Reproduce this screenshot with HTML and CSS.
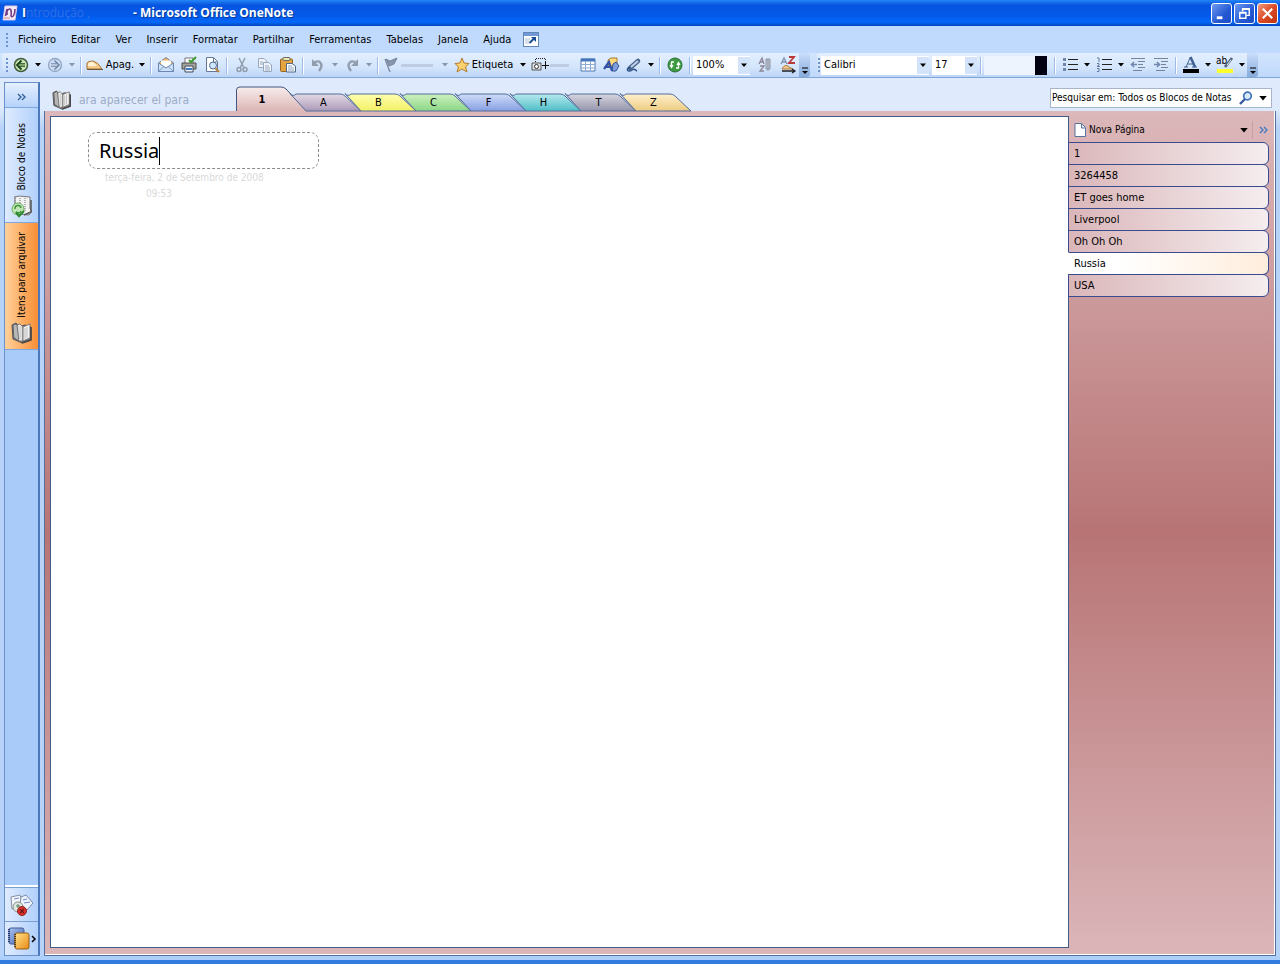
FILE: index.html
```html
<!DOCTYPE html>
<html lang="pt">
<head>
<meta charset="utf-8">
<title>Microsoft Office OneNote</title>
<link rel="stylesheet" href="styles.css">
</head>
<body>
<svg class="defs" aria-hidden="true">
  <defs>
    <linearGradient id="gBook" x1="0" x2="1"><stop offset="0" stop-color="#999"/><stop offset=".4" stop-color="#fff"/><stop offset="1" stop-color="#ccc"/></linearGradient>
    <linearGradient id="gOrange" x1="0" x2="1" y2="1"><stop offset="0" stop-color="#ffe38a"/><stop offset="1" stop-color="#e98a16"/></linearGradient>
    <linearGradient id="gBlue" x1="0" x2="1" y2="1"><stop offset="0" stop-color="#a9c3f2"/><stop offset="1" stop-color="#4062b0"/></linearGradient>
    <symbol id="arrow" viewBox="0 0 6 4"><path d="M0 0H6L3 3.5Z" fill="currentColor"/></symbol>
    <symbol id="book" viewBox="0 0 22 22">
      <path d="M1 3L5 1L8 5L14 3L20 5V18L11 21L2 17Z" fill="#777" stroke="#555"/>
      <path d="M2 3L5 2L8 5V19L3 16Z" fill="#b5b5b5" stroke="#666"/>
      <path d="M6 3L9 2L12 5V19L8 19Z" fill="url(#gBook)" stroke="#777"/>
      <path d="M12 5L19 2V16L12 19Z" fill="#f4f4f4" stroke="#777"/>
      <path d="M4 4V15M9 4V17M14 6V17M16 5V16" stroke="#bbb"/>
      <path d="M20 5V18L11 21" fill="none" stroke="#444" stroke-width="1.500"/>
    </symbol>
  </defs>
</svg>
<div class="window">
  <header class="titlebar">
    <svg class="app-icon" viewBox="0 0 16 16"><path d="M3 1H15L13 15H1Z" fill="#f4ecf6" stroke="#d8cbe8"/><path d="M3.500 11L5 4V10M5 6C8 2 10 4 9 11C10 13 13 11 13 4" fill="none" stroke="#743b86" stroke-width="1.600"/><path d="M2 13H8" stroke="#d68b93"/></svg>
    <h1 class="title"><span>I</span><span class="title-doc">ntrodução ,</span><span>- Microsoft Office OneNote</span></h1>
    <div class="window-buttons">
      <button class="winbtn" aria-label="Minimizar"><svg viewBox="0 0 18 18"><path d="M4 13.500H10" stroke="#fff" stroke-width="3"/></svg></button>
      <button class="winbtn" aria-label="Restaurar"><svg viewBox="0 0 18 18"><path d="M7 7V4H14V11H11M7 4.500H14" fill="none" stroke="#fff" stroke-width="1.500"/><path d="M4 8H10.500V14H4ZM4 8.500H10" fill="none" stroke="#fff" stroke-width="1.500"/></svg></button>
      <button class="winbtn close" aria-label="Fechar"><svg viewBox="0 0 18 18"><path d="M4 4L14 14M14 4L4 14" stroke="#fff" stroke-width="2.200"/></svg></button>
    </div>
  </header>

  <nav class="menubar" aria-label="Menu">
    <span class="grip"></span>
    <button>Ficheiro</button><button>Editar</button><button>Ver</button><button>Inserir</button><button>Formatar</button><button>Partilhar</button><button>Ferramentas</button><button>Tabelas</button><button>Janela</button><button>Ajuda</button>
    <button class="fullpage" aria-label="Vista de página inteira"><svg viewBox="0 0 16 15"><rect x=".5" y=".5" width="15" height="14" fill="#fff" stroke="#6286b5"/><path d="M1 2.500H15" stroke="#6f9ad5" stroke-width="3"/><path d="M2 7H7M2 9H6M2 11H6" stroke="#aebfd8"/><path d="M6.500 11L11 6.500" stroke="#164c91" stroke-width="2"/><path d="M8 5H13V10Z" fill="#164c91"/></svg></button>
  </nav>

  <div class="toolbars">
    <div class="toolbar" role="toolbar" aria-label="Padrão">
      <span class="grip"></span>
      <button class="tool" aria-label="Retroceder"><svg viewBox="0 0 16 16"><circle cx="8" cy="8" r="6.500" fill="#cde5b6" stroke="#3f5f3d" stroke-width="1.500"/><path d="M12 8H6" stroke="#174219" stroke-width="3.500"/><path d="M12 8H6" stroke="#b6dc93" stroke-width="1.300"/><path d="M8.500 3.500L4 8L8.500 12.500" fill="none" stroke="#174219" stroke-width="1.800"/></svg></button>
      <button class="drop" aria-label="Histórico"><svg><use href="#arrow"/></svg></button>
      <button class="tool" aria-label="Avançar"><svg viewBox="0 0 16 16"><circle cx="8" cy="8" r="6.500" fill="#cbdcf4" stroke="#91a5c2" stroke-width="1.300"/><path d="M4 8H10" stroke="#7187a6" stroke-width="3.500"/><path d="M4 8H10" stroke="#dce8f8" stroke-width="1.300"/><path d="M7.500 3.500L12 8L7.500 12.500" fill="none" stroke="#7187a6" stroke-width="1.600"/></svg></button>
      <button class="drop off" aria-label="Avançar para"><svg><use href="#arrow"/></svg></button>
      <span class="sep"></span>
      <button class="tool wide eraser"><svg viewBox="0 0 18 16"><path d="M1 12V6Q2 4 7 4Q12 5 16 12Z" fill="#f6ca89" stroke="#a77337"/><path d="M2 7Q4 4 7 5L11 9H2Z" fill="#fff2d4"/><path d="M1 12.500H17" stroke="#68533e"/></svg>Apag.</button>
      <button class="drop" aria-label="Opções da borracha"><svg><use href="#arrow"/></svg></button>
      <span class="sep"></span>
      <button class="tool" aria-label="Correio"><svg viewBox="0 0 16 16"><path d="M.5 6L8 .5L15.500 6V14.500H.5Z" fill="#f5b55e" stroke="#7787a3"/><path d="M3 3.500H13V10H3Z" fill="#fff"/><path d="M.5 6L8 11L15.500 6V14.500H.5Z" fill="#cfe2fc" stroke="#6a86b2"/><path d="M1 14L6 9.500M15 14L10 9.500" stroke="#7f99be"/></svg></button>
      <button class="tool" aria-label="Imprimir"><svg viewBox="0 0 16 16"><path d="M4 1H12V7H4Z" fill="#fff" stroke="#777"/><path d="M1 6H15V12H1Z" fill="#a6a69e" stroke="#494b4b"/><path d="M4 9H12V15H4Z" fill="#edf4ff" stroke="#424a55"/><path d="M5 12H11" stroke="#447ac2" stroke-width="2"/><path d="M8 3L10 5L15 0" fill="none" stroke="#3e9b30" stroke-width="2"/></svg></button>
      <button class="tool" aria-label="Pré-visualizar"><svg viewBox="0 0 16 16"><path d="M2.500 .5H9.500L13.500 4.500V14.500H2.500Z" fill="#fff" stroke="#637797"/><path d="M9.500 1V5H13" fill="none" stroke="#637797"/><circle cx="9" cy="8.500" r="3.500" fill="#cee6fc" stroke="#536c8a"/><path d="M11.500 11.500L15 15" stroke="#ba8240" stroke-width="2.200"/></svg></button>
      <span class="sep"></span>
      <button class="tool" aria-label="Cortar"><svg viewBox="0 0 16 16"><g fill="none" stroke="#909dac" stroke-width="1.500"><path d="M5 1L10 11M11 1L6 11"/><circle cx="5" cy="12.500" r="2"/><circle cx="11" cy="12.500" r="2"/></g></svg></button>
      <button class="tool" aria-label="Copiar"><svg viewBox="0 0 16 16"><g fill="#f0f4fa" stroke="#98a8bf"><path d="M1.500 1.500H7L9.500 4V10.500H1.500Z"/><path d="M6.500 5.500H12L14.500 8V14.500H6.500Z"/><path d="M3 5H6M3 7H6M8 9H12M8 11H13M8 13H13"/></g></svg></button>
      <button class="tool" aria-label="Colar"><svg viewBox="0 0 16 16"><rect x=".5" y="2" width="12" height="12.500" rx="1" fill="#e4a53f" stroke="#9a6523"/><rect x="3" y=".5" width="7" height="3" rx="1" fill="#eee6b3" stroke="#6b6b62"/><path d="M6.500 6.500H12L15.500 9V15H6.500Z" fill="#fff" stroke="#53698b"/><path d="M8 9H12M8 11H14M8 13H14" stroke="#8da4c5"/></svg></button>
      <span class="sep"></span>
      <button class="tool" aria-label="Anular"><svg viewBox="0 0 16 16"><path d="M4 6C8 2 15 6 9 14" fill="none" stroke="#929eae" stroke-width="2.400"/><path d="M2 2V9H9Z" fill="#929eae"/></svg></button>
      <button class="drop off" aria-label="Anular lista"><svg><use href="#arrow"/></svg></button>
      <button class="tool" aria-label="Refazer"><svg viewBox="0 0 16 16"><path d="M12 6C8 2 1 6 7 14" fill="none" stroke="#929eae" stroke-width="2.400"/><path d="M14 2V9H7Z" fill="#929eae"/></svg></button>
      <button class="drop off" aria-label="Refazer lista"><svg><use href="#arrow"/></svg></button>
      <span class="sep"></span>
      <button class="tool flag" aria-label="Tarefa"><svg viewBox="0 0 16 16"><path d="M2 2L7 15" stroke="#8491a6" stroke-width="1.500"/><path d="M3 2L7 4L14 1L11 7L6 9Z" fill="#8896ab" stroke="#7885a0"/></svg></button>
      <span class="blank task"></span>
      <button class="drop off" aria-label="Opções da tarefa"><svg><use href="#arrow"/></svg></button>
      <button class="tool wide tag"><svg viewBox="0 0 16 16"><path d="M8 1L10 6L15 6.500L11.500 10L13 15L8 12L3 15L4.500 10L1 6.500L6 6Z" fill="#ffd16d" stroke="#b37b2b"/></svg>Etiqueta</button>
      <button class="drop" aria-label="Etiquetas"><svg><use href="#arrow"/></svg></button>
      <button class="tool" aria-label="Recorte de ecrã"><svg viewBox="0 0 16 16"><path d="M3.500 5V1.500H13.500V5" fill="none" stroke="#222" stroke-dasharray="1 1"/><path d="M0 6H9V13H0Z" fill="#dce1e5" stroke="#555"/><circle cx="4.500" cy="9.500" r="2" fill="#fff" stroke="#333"/><path d="M13.500 5V12M10 8.500H17" stroke="#111"/></svg></button>
      <span class="blank clip"></span>
      <button class="tool" aria-label="Tabela"><svg viewBox="0 0 16 16"><path d="M1 2H15V14H1Z" fill="#fff" stroke="#5178b2"/><path d="M1 3H15" stroke="#4678ba" stroke-width="3"/><path d="M5.500 4V14M10.500 4V14M1 7.500H15M1 11H15" stroke="#8aaad5"/></svg></button>
      <button class="tool" aria-label="Desenho"><svg viewBox="0 0 16 16"><path d="M5 3L8 1H14V7L11 9H5Z" fill="#ffd878" stroke="#a77b38"/><path d="M10 7L13 5L16 9L13 14H9Z" fill="#7f9edb" stroke="#33549b"/><path d="M1 12L6 5L9 14M3 10H8" fill="none" stroke="#3451a8" stroke-width="2.200"/></svg></button>
      <button class="tool" aria-label="Gravar áudio"><svg viewBox="0 0 16 16"><path d="M12 4L4 11" stroke="#48648c" stroke-width="4.500" stroke-linecap="round"/><path d="M12 4L5 10" stroke="#c1d2eb" stroke-width="2"/><path d="M4 10C-1 12 2 16 6 13C9 11 9 13 11 14" fill="none" stroke="#2f558c" stroke-width="1.500"/></svg></button>
      <button class="drop" aria-label="Opções de gravação"><svg><use href="#arrow"/></svg></button>
      <span class="sep"></span>
      <button class="tool" aria-label="Sincronizar"><svg viewBox="0 0 16 16"><circle cx="8" cy="8" r="7" fill="#3d9a43" stroke="#286e35"/><path d="M7 5H4.500V10M3 8L4.500 10.500L6 8M9 11H11.500V6M10 8L11.500 5.500L13 8" fill="none" stroke="#fff" stroke-width="1.300"/></svg></button>
      <span class="sep"></span>
      <span class="combo zoom"><select aria-label="Zoom"><option>100%</option></select><svg><use href="#arrow"/></svg></span>
      <button class="tool" aria-label="Ordenar"><svg viewBox="0 0 16 16"><path d="M2 7L5 1L7 7M3 5H6M3 9H7L3 14H7" fill="none" stroke="#8c8795" stroke-width="1.300"/><path d="M9 2H13V12H9ZM11 2V14" fill="#c2c8d5" stroke="#8b93a4"/></svg></button>
      <button class="tool" aria-label="Idioma"><svg viewBox="0 0 16 16"><path d="M1 7L4 1L7 7M2 5H6" fill="none" stroke="#7f92b4" stroke-width="1.300"/><path d="M9 0H14L9 6H15" fill="none" stroke="#b93838" stroke-width="1.800"/><path d="M2 12Q5 6 9 10L13 12Z" fill="#f4c889" stroke="#b17b41"/><path d="M2 14H14M12 12L15 14L12 16" fill="none" stroke="#222" stroke-width="1.300"/></svg></button>
      <button class="cap" aria-label="Mais botões"><svg viewBox="0 0 8 8"><path d="M1 1H7" stroke="#000"/><path d="M1 4H7L4 7Z"/></svg></button>
    </div>
    <div class="toolbar format" role="toolbar" aria-label="Formatação">
      <span class="grip"></span>
      <span class="combo font"><select aria-label="Tipo de letra"><option>Calibri</option></select><svg><use href="#arrow"/></svg></span>
      <span class="combo size"><select aria-label="Tamanho"><option>17</option></select><svg><use href="#arrow"/></svg></span>
      <span class="sep"></span>
      <button class="ink" aria-label="Cor"></button>
      <span class="sep"></span>
      <button class="tool" aria-label="Marcas"><svg viewBox="0 0 16 16"><path d="M6 2.500H16M6 7.500H16M6 12.500H16" stroke="#222"/><path d="M1 2.500H4M1 7.500H4M1 12.500H4" stroke="#7087aa" stroke-width="3"/></svg></button>
      <button class="drop" aria-label="Tipos de marcas"><svg><use href="#arrow"/></svg></button>
      <button class="tool" aria-label="Numeração"><svg viewBox="0 0 16 16"><path d="M6 2.500H16M6 7.500H16M6 12.500H16" stroke="#222"/><path d="M1 1H3V5M1 6.500H3V8L1 9.500H4M1 11.500H3V14.500H1" fill="none" stroke="#617ba3"/></svg></button>
      <button class="drop" aria-label="Tipos de numeração"><svg><use href="#arrow"/></svg></button>
      <button class="tool" aria-label="Diminuir avanço"><svg viewBox="0 0 16 16"><path d="M1 1.500H15M8 4.500H15M8 7.500H13M8 10.500H15M3 13.500H12" stroke="#77859c"/><path d="M7 7.500H2M4 5L1.500 7.500L4 10" fill="none" stroke="#6e86ad" stroke-width="1.500"/></svg></button>
      <button class="tool" aria-label="Aumentar avanço"><svg viewBox="0 0 16 16"><path d="M1 1.500H15M8 4.500H15M8 7.500H13M8 10.500H15M3 13.500H12" stroke="#77859c"/><path d="M1 7.500H6M4 5L6.500 7.500L4 10" fill="none" stroke="#6e86ad" stroke-width="1.500"/></svg></button>
      <span class="sep"></span>
      <button class="tool" aria-label="Cor do texto"><svg viewBox="0 0 16 16"><path d="M3 10L7.500 0" stroke="#3e5f90"/><path d="M7.500 0L12 10" stroke="#3e5f90" stroke-width="2.500"/><path d="M5 7H10M1 10H5M9 10H14" stroke="#3e5f90"/><path d="M0 12H16V16H0Z"/></svg></button>
      <button class="drop" aria-label="Cores do texto"><svg><use href="#arrow"/></svg></button>
      <button class="tool highlight" aria-label="Realce"><span>ab</span><svg viewBox="0 0 16 16"><path d="M0 12H16V16H0Z" fill="#ffff2d"/><path d="M8 10L15 1" stroke="#596a7c" stroke-width="2.800"/><path d="M10 8L14 3" stroke="#dce8ef"/></svg></button>
      <button class="drop" aria-label="Cores de realce"><svg><use href="#arrow"/></svg></button>
      <button class="cap" aria-label="Mais formatos"><svg viewBox="0 0 8 8"><path d="M1 1H7" stroke="#000"/><path d="M1 4H7L4 7Z"/></svg></button>
    </div>
  </div>

  <div class="workspace">
    <aside class="sidebar">
      <button class="expand" aria-label="Expandir"><svg viewBox="0 0 10 8"><path d="M1 1L4 4L1 7M5 1L8 4L5 7" fill="none" stroke="#35619c" stroke-width="1.400"/></svg></button>
      <button class="notebook"><svg viewBox="0 0 22 22"><path d="M4 2L8 1L19 2V14L21 16L18 20L9 19L4 16Z" fill="#f2f2f2" stroke="#777"/><path d="M4 1V12M9 3V15M14 3V16" stroke="#777" stroke-dasharray="1 1"/><path d="M20 5V17L13 20" fill="none" stroke="#555" stroke-width="1.500"/><circle cx="7" cy="14" r="6" fill="#c2e6b5" stroke="#6cae61"/><path d="M4 14A3 3 0 0 1 10 13M10 16A3 3 0 0 1 5 17" fill="none" stroke="#3e963e" stroke-width="1.500"/><path d="M5 17L8 21L13 16" fill="none" stroke="#2f8a34" stroke-width="2.200"/></svg><span>Bloco de Notas</span></button>
      <button class="notebook selected"><svg><use href="#book"/></svg><span>Itens para arquivar</span></button>
      <div class="side-space"></div>
      <button class="side-tool" aria-label="Notas não arquivadas"><svg viewBox="0 0 24 24"><path d="M1 4L10 2L13 12L2 16Z" fill="#f4f6fa" stroke="#8790a0"/><path d="M11 4L16 2L23 10L17 17L10 11Z" fill="#edf3fc" stroke="#7c8ba7"/><path d="M4 6L9 5M13 7L17 6M14 10L20 9" stroke="#6e8cd0"/><circle cx="8" cy="14" r="5" fill="#dfe9df" stroke="#838d88"/><path d="M6 13H10M8 11V15" stroke="#5b806b"/><circle cx="12" cy="18" r="4.500" fill="#d9352d" stroke="#99201c"/><path d="M10 16L14 20M14 16L10 20" stroke="#6d1613" stroke-width="1.200"/></svg></button>
      <button class="side-tool books" aria-label="Todos os blocos"><svg viewBox="0 0 24 24"><rect x="2" y="1" width="15" height="16" rx="2" fill="url(#gBlue)" stroke="#435c95"/><path d="M2 2V16" stroke="#26396c" stroke-width="2" stroke-dasharray="1 1"/><rect x="8" y="6" width="14" height="16" rx="2" fill="url(#gOrange)" stroke="#955d16"/><path d="M8 7V21" stroke="#573a16" stroke-width="2" stroke-dasharray="1 1"/></svg><svg class="more" viewBox="0 0 4 8"><path d="M0 1L3 4L0 7" fill="none" stroke="#000" stroke-width="1.500"/></svg></button>
    </aside>

    <main class="content">
      <div class="section-row">
        <div class="book-title"><svg><use href="#book"/></svg><span>ara aparecer el para</span></div>
        <nav class="tabs" aria-label="Secções">
          <button class="tab active"><svg viewBox="0 0 74 25"><defs><linearGradient id="t1" x2="0" y2="1"><stop stop-color="#f8ecec"/><stop offset="1" stop-color="#dcb6b6"/></linearGradient></defs><path d="M.5 25V4Q.5 1 4 1H45Q48 1 50 3L71 25" fill="url(#t1)" stroke="#435781"/></svg><span>1</span></button>
          <button class="tab"><svg viewBox="0 0 74 18"><defs><linearGradient id="ta" x2="0" y2="1"><stop stop-color="#e6dce6"/><stop offset="1" stop-color="#ab99b8"/></linearGradient></defs><path d="M2 .5Q5 4 8 1H52Q55 1 57 3L73 18H18Z" fill="url(#ta)" stroke="#536c9a"/></svg><span>A</span></button>
          <button class="tab"><svg viewBox="0 0 74 18"><defs><linearGradient id="tb" x2="0" y2="1"><stop stop-color="#ffffb2"/><stop offset="1" stop-color="#f3f064"/></linearGradient></defs><path d="M2 .5Q5 4 8 1H52Q55 1 57 3L73 18H18Z" fill="url(#tb)" stroke="#536c9a"/></svg><span>B</span></button>
          <button class="tab"><svg viewBox="0 0 74 18"><defs><linearGradient id="tc" x2="0" y2="1"><stop stop-color="#d0f1c0"/><stop offset="1" stop-color="#8bd787"/></linearGradient></defs><path d="M2 .5Q5 4 8 1H52Q55 1 57 3L73 18H18Z" fill="url(#tc)" stroke="#536c9a"/></svg><span>C</span></button>
          <button class="tab"><svg viewBox="0 0 74 18"><defs><linearGradient id="tf" x2="0" y2="1"><stop stop-color="#d2def9"/><stop offset="1" stop-color="#879fe3"/></linearGradient></defs><path d="M2 .5Q5 4 8 1H52Q55 1 57 3L73 18H18Z" fill="url(#tf)" stroke="#536c9a"/></svg><span>F</span></button>
          <button class="tab"><svg viewBox="0 0 74 18"><defs><linearGradient id="th" x2="0" y2="1"><stop stop-color="#b9eaef"/><stop offset="1" stop-color="#4fbec7"/></linearGradient></defs><path d="M2 .5Q5 4 8 1H52Q55 1 57 3L73 18H18Z" fill="url(#th)" stroke="#536c9a"/></svg><span>H</span></button>
          <button class="tab"><svg viewBox="0 0 74 18"><defs><linearGradient id="tt" x2="0" y2="1"><stop stop-color="#d9d7e0"/><stop offset="1" stop-color="#9494ac"/></linearGradient></defs><path d="M2 .5Q5 4 8 1H52Q55 1 57 3L73 18H18Z" fill="url(#tt)" stroke="#536c9a"/></svg><span>T</span></button>
          <button class="tab"><svg viewBox="0 0 74 18"><defs><linearGradient id="tz" x2="0" y2="1"><stop stop-color="#fff0ce"/><stop offset="1" stop-color="#edcc80"/></linearGradient></defs><path d="M2 .5Q5 4 8 1H52Q55 1 57 3L73 18H18Z" fill="url(#tz)" stroke="#536c9a"/></svg><span>Z</span></button>
        </nav>
        <div class="search">
          <input type="text" aria-label="Pesquisar" value="Pesquisar em: Todos os Blocos de Notas">
          <button aria-label="Pesquisar agora"><svg viewBox="0 0 14 14"><circle cx="8.500" cy="5" r="3.800" fill="#d9ecff" stroke="#4771b6" stroke-width="1.700"/><path d="M6 8L1 13" stroke="#375c9f" stroke-width="2.400"/></svg></button>
          <button aria-label="Âmbito"><svg class="small-arrow"><use href="#arrow"/></svg></button>
        </div>
      </div>
      <div class="frame">
        <article class="page">
          <div class="note" role="textbox" contenteditable="true" aria-label="Título">Russia<span class="caret"></span></div>
          <div class="stamp"><time>terça-feira, 2 de Setembro de 2008</time><time class="hour">09:53</time></div>
        </article>
        <aside class="pages">
          <div class="pages-head">
            <button class="new-page"><svg viewBox="0 0 12 14"><path d="M1 .5H7.500L11.500 4.500V13.500H1Z" fill="#fff" stroke="#58749d"/><path d="M7.500 1V5H11" fill="#dce8f8" stroke="#58749d"/></svg>Nova Página</button>
            <button class="page-menu" aria-label="Opções de página"><svg class="small-arrow"><use href="#arrow"/></svg></button>
            <button class="collapse" aria-label="Recolher"><svg viewBox="0 0 10 8"><path d="M1 1L4 4L1 7M5 1L8 4L5 7" fill="none" stroke="#4779c0" stroke-width="1.400"/></svg></button>
          </div>
          <div class="page-list">
            <button>1</button><button>3264458</button><button>ET goes home</button><button>Liverpool</button><button>Oh Oh Oh</button><button class="current">Russia</button><button>USA</button>
          </div>
        </aside>
      </div>
    </main>
  </div>
  <footer class="bottom-edge"></footer>
</div>
</body>
</html>
```
FILE: styles.css
```css
* { box-sizing: border-box; }
body {
  margin: 0;
  font: 11px/14px "DejaVu Sans Condensed", "DejaVu Sans", sans-serif;
  color: #000;
}
button, select, input { font: inherit; color: inherit; margin: 0; padding: 0; border: 0; background: none; }
button { display: flex; align-items: center; justify-content: center; white-space: nowrap; }
svg { display: block; flex: none; overflow: visible; }
.defs { position: absolute; width: 0; height: 0; }
.window { display: flex; flex-direction: column; min-height: 100vh; background: #c1dbfc; }

.titlebar {
  display: flex; align-items: center; height: 26px; padding: 0 2px; gap: 4px;
  background: linear-gradient(#2485f8 0, #0755df 5px, #0358e8 15px, #0468fb 22px, #0345bd 26px);
  color: #fff;
}
.app-icon { width: 16px; height: 16px; }
.title { flex: 1; display: flex; margin: 0; font: bold 12px/16px "Open Sans", sans-serif; text-shadow: 1px 1px 1px #06399b; }
.title-doc { width: 107px; color: #2f70e8; text-shadow: none; font-weight: normal; }
.window-buttons { display: flex; gap: 2px; }
.winbtn { width: 21px; height: 21px; border: 1px solid #fff; border-radius: 3px; background: linear-gradient(135deg, #6e9af1, #2459d3 60%, #1c4cc4); }
.winbtn svg { width: 17px; height: 17px; }
.winbtn.close { background: linear-gradient(135deg, #f09a80, #dd4a25 50%, #bd3412); }

.menubar { display: flex; align-items: center; height: 27px; padding: 0 6px; gap: 15px; background: #bfdafc; }
.menubar .grip { margin-right: -5px; }
.fullpage { margin-left: -3px; }
.fullpage svg { width: 16px; height: 15px; }
.grip { width: 2px; height: 14px; flex: none; background: repeating-linear-gradient(#6f92cc 0 2px, transparent 2px 4px); }

.toolbars { display: flex; height: 25px; padding-left: 2px; background: linear-gradient(#d2e5fd, #bfd8fa); border-bottom: 1px solid #80a7d9; }
.toolbar { display: flex; align-items: center; height: 24px; padding-left: 4px; border-radius: 3px; background: linear-gradient(#e3effe, #d3e5fc 60%, #bed5f6); }
.toolbar.format { margin-left: 7px; padding-left: 1px; }
.toolbar .grip { margin-right: 1px; }
.tool { position: relative; width: 23px; height: 22px; flex: none; }
.tool svg { width: 16px; height: 16px; }
.tool.wide { gap: 2px; }
.tool.eraser { width: 52px; }
.tool.eraser svg { width: 18px; }
.tool.flag { width: 20px; }
.tool.tag { width: 67px; }
.drop { width: 11px; height: 22px; flex: none; }
.drop svg { width: 6px; height: 4px; }
.drop.off { color: #8796ae; }
.sep { width: 1px; height: 17px; margin: 0 3px; flex: none; background: #9ebbe5; box-shadow: 1px 0 #fff; }
.blank { height: 3px; flex: none; background: #bfcbe0; }
.task { width: 32px; margin-right: 6px; }
.clip { width: 19px; margin: 0 7px 0 -1px; }
.combo { display: flex; align-items: center; height: 19px; background: #fff; flex: none; }
.combo select { flex: 1; min-width: 0; height: 19px; padding-left: 3px; appearance: none; }
.combo svg { width: 12px; height: 17px; padding: 6px 3px; background: #d2e3fa; }
.combo.zoom { width: 57px; margin-right: 3px; }
.combo.font { width: 108px; margin-right: 3px; }
.combo.size { width: 45px; }
.cap { width: 11px; height: 24px; align-items: flex-end; padding-bottom: 2px; border-radius: 0 3px 3px 0; background: linear-gradient(#c9defb, #86aada); }
.cap svg { width: 8px; height: 8px; }
.ink { width: 63px; height: 19px; border-left: 51px solid #edf4fe; background: #000010; margin-right: 4px; }
.highlight span { position: absolute; left: 3px; top: 1px; font-size: 10px; line-height: 12px; }

.workspace { display: flex; flex: 1; padding: 0 4px; background: linear-gradient(#dfebfd 0 30px, #b8d3fa 50px); }
.sidebar { display: flex; flex-direction: column; width: 36px; margin-top: 4px; border: 1px solid #6b91ca; border-right: 2px solid #4c79bb; background: #a9cbfa; }
.sidebar button { width: 100%; border-bottom: 1px solid #80a8df; background: linear-gradient(90deg, #deebff, #b1d0fb); }
.sidebar .expand { height: 25px; padding-top: 3px; background: linear-gradient(#e5f0ff, #b6d2fa); }
.expand svg, .collapse svg { width: 10px; height: 8px; }
.sidebar .notebook { flex-direction: column-reverse; justify-content: flex-start; gap: 4px; height: 115px; padding-bottom: 5px; }
.notebook svg { width: 22px; height: 22px; }
.notebook span { writing-mode: vertical-rl; transform: rotate(180deg); font-size: 10px; line-height: 12px; }
.sidebar .notebook.selected { height: 127px; background: linear-gradient(90deg, #ffd19a, #f98e35); }
.side-space { flex: 1; border-bottom: 2px solid #fff; }
.sidebar .side-tool { height: 34px; gap: 1px; border-top: 1px solid #7b9fd1; border-bottom: 0; }
.side-tool svg { width: 24px; height: 24px; }
.side-tool .more { width: 4px; height: 8px; }

.content { display: flex; flex-direction: column; flex: 1; min-width: 0; margin-left: 4px; }
.section-row { display: flex; align-items: flex-end; height: 33px; padding-left: 8px; padding-right: 4px; }
.book-title { display: flex; align-items: center; gap: 7px; width: 184px; height: 22px; color: #9cacc6; font-size: 12px; white-space: nowrap; }
.book-title svg { width: 20px; height: 20px; }
.tabs { display: flex; align-items: flex-end; flex: 1; }
.tab { position: relative; width: 55px; height: 18px; padding-top: 2px; }
.tab svg { position: absolute; left: 0; bottom: 0; width: 74px; height: 18px; }
.tab span { position: relative; left: 8px; }
.tab.active { width: 52px; height: 25px; font-weight: bold; }
.tab.active svg { height: 25px; }
.tab.active span { left: 0; }
.search { display: flex; align-items: center; width: 222px; height: 20px; margin-bottom: 3px; border: 1px solid #a9b6c9; background: #fff; }
.search input { flex: 1; min-width: 0; padding-left: 1px; font-size: 10px; line-height: 14px; }
.search button { width: 17px; height: 18px; }
.search svg { width: 14px; height: 14px; }
.search .small-arrow, .small-arrow { width: 8px; height: 5px; }

.frame { display: flex; flex: 1; padding: 5px 6px 7px 5px; border: 1px solid #526f9e; border-top: 0; background: linear-gradient(#dcb8ba, #b87475 50%, #dbb6b9); box-shadow: inset -1px -1px #fff; }
.page { flex: 1; min-width: 0; padding: 15px 37px; background: #fff; border: 1px solid #425b87; }
.note { display: flex; align-items: center; width: 231px; height: 37px; padding-left: 10px; border: 1px dashed #8a8a8a; border-radius: 9px; font: 20px/28px "Noto Sans", sans-serif; outline: 0; }
.caret { width: 1px; height: 28px; background: #000; }
.stamp { display: flex; flex-direction: column; padding: 2px 17px; gap: 2px; font-size: 10px; color: #d9d9d9; }
.hour { padding-left: 41px; }
.pages { width: 201px; margin-left: -1px; }
.pages-head { display: flex; align-items: center; height: 26px; padding-top: 2px; padding-left: 6px; }
.new-page { flex: 1; justify-content: flex-start; gap: 3px; font-size: 10px; }
.new-page svg { width: 12px; height: 14px; }
.page-menu { width: 17px; height: 20px; }
.collapse { width: 17px; height: 18px; border-left: 1px solid #c99fa2; padding-left: 5px; }
.page-list { display: flex; flex-direction: column; }
.page-list button { justify-content: flex-start; height: 23px; margin-bottom: -1px; padding-left: 5px; border: 1px solid #3a4c8f; border-radius: 0 6px 6px 0; background: linear-gradient(90deg, #dab6b9, #f5edef); }
.page-list .current { border-left-color: #fff; background: linear-gradient(90deg, #fff 25%, #ffeddc); }
.bottom-edge { height: 8px; border-bottom: 4px solid #317bdd; background: #acd0fb; }
```
